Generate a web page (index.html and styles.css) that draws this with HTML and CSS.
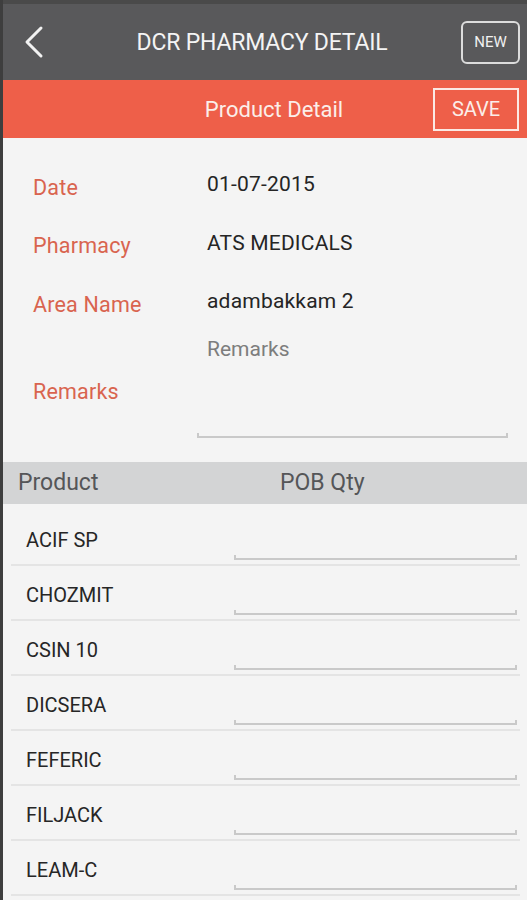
FILE: index.html
```html
<!DOCTYPE html>
<html lang="en">
<head>
  <meta charset="UTF-8">
  <meta name="viewport" content="width=device-width, initial-scale=1.0">
  <title>DCR Pharmacy Detail</title>
  <link rel="stylesheet" href="styles.css">
</head>
<body>
  <div class="page">
    <div class="topbar">
      <div class="back">
        <svg width="22" height="34" viewBox="0 0 22 34">
          <path d="M18 3 L4 17 L18 31" fill="none" stroke="#f2f2f2" stroke-width="3" stroke-linecap="round" stroke-linejoin="round"/>
        </svg>
      </div>
      <div class="title">DCR PHARMACY DETAIL</div>
      <div class="new_btn">NEW</div>
    </div>

    <div class="subbar">
      <div class="subtitle">Product Detail</div>
      <div class="save_btn">SAVE</div>
    </div>

    <div class="form">
      <div class="form_row">
        <span class="label">Date</span>
        <span class="value">01-07-2015</span>
      </div>
      <div class="form_row">
        <span class="label">Pharmacy</span>
        <span class="value">ATS MEDICALS</span>
      </div>
      <div class="form_row">
        <span class="label">Area Name</span>
        <span class="value">adambakkam 2</span>
      </div>
      <div class="remarks_row">
        <span class="label remarks_label">Remarks</span>
        <div class="remarks_field">
          <span class="hint">Remarks</span>
          <div class="underline"></div>
        </div>
      </div>
    </div>

    <div class="table_head">
      <span class="col_product">Product</span>
      <span class="col_qty">POB Qty</span>
    </div>

    <div class="products">
      <div class="product_row"><span class="name">ACIF SP</span><div class="qty"><div class="underline"></div></div></div>
      <div class="product_row"><span class="name">CHOZMIT</span><div class="qty"><div class="underline"></div></div></div>
      <div class="product_row"><span class="name">CSIN 10</span><div class="qty"><div class="underline"></div></div></div>
      <div class="product_row"><span class="name">DICSERA</span><div class="qty"><div class="underline"></div></div></div>
      <div class="product_row"><span class="name">FEFERIC</span><div class="qty"><div class="underline"></div></div></div>
      <div class="product_row"><span class="name">FILJACK</span><div class="qty"><div class="underline"></div></div></div>
      <div class="product_row"><span class="name">LEAM-C</span><div class="qty"><div class="underline"></div></div></div>
    </div>
  </div>
</body>
</html>
```

FILE: styles.css
```css
* {
  font-family: Roboto, 'Liberation Sans', sans-serif;
  box-sizing: border-box;
}

body {
  margin: 0;
  background: #f4f4f4;
}

.page {
  width: 527px;
  min-height: 900px;
  border-left: 3px solid #3e3e3e;
  background: #f4f4f4;
}

.topbar {
  height: 80px;
  background: #59595b;
  border-top: 4px solid #4a4a4a;
  display: flex;
  align-items: center;
}

.back {
  width: 60px;
  padding-left: 20px;
  display: flex;
  align-items: center;
}

.title {
  flex: 1;
  text-align: center;
  color: #f4f4f4;
  font-size: 23px;
  letter-spacing: -0.2px;
}

.new_btn {
  width: 59px;
  height: 43px;
  margin-right: 7px;
  border: 2px solid #dcdcdc;
  border-radius: 6px;
  color: #f0f0f0;
  font-size: 15px;
  display: flex;
  align-items: center;
  justify-content: center;
}

.subbar {
  height: 58px;
  background: #ee5f49;
  display: flex;
  align-items: center;
  justify-content: flex-end;
  position: relative;
}

.subtitle {
  position: absolute;
  left: 0;
  right: 0;
  text-align: center;
  color: #fbeee9;
  font-size: 22px;
  margin-left: 18px;
}

.save_btn {
  width: 86px;
  height: 43px;
  margin-right: 8px;
  border: 2px solid #fbe9e4;
  color: #fbeee9;
  font-size: 20px;
  display: flex;
  align-items: center;
  justify-content: center;
  position: relative;
}

.form {
  padding: 17px 20px 0 30px;
}

.form_row {
  display: flex;
  align-items: center;
  height: 58.5px;
}

.label {
  width: 174px;
  color: #d9644f;
  font-size: 21.5px;
  letter-spacing: 0.2px;
  padding-top: 6px;
}

.value {
  color: #252525;
  font-size: 21px;
  letter-spacing: 0.2px;
}

.remarks_row {
  display: flex;
  height: 114px;
}

.remarks_label {
  padding-top: 48px;
}

.remarks_field {
  flex: 1;
  margin-left: -10px;
  padding-top: 6px;
}

.hint {
  display: block;
  color: #7d7d7d;
  font-size: 21px;
  padding-left: 10px;
}

.remarks_field .underline {
  margin-top: 72px;
  margin-right: -1px;
}

.underline {
  height: 5px;
  border: 2px solid #c9c9c9;
  border-top: none;
}

.table_head {
  margin-top: 17px;
  height: 42px;
  background: #d3d4d5;
  display: flex;
  align-items: center;
  font-size: 23px;
  color: #555658;
}

.col_product {
  width: 277px;
  padding-left: 15px;
}

.products {
  padding: 7px 7px 0 8px;
}

.product_row {
  height: 55px;
  display: flex;
  border-bottom: 2px solid #e4e4e4;
}

.name {
  width: 223px;
  padding-left: 15px;
  padding-top: 17px;
  font-size: 20px;
  color: #262626;
}

.qty {
  flex: 1;
  padding-top: 44px;
  padding-right: 3px;
}
```
